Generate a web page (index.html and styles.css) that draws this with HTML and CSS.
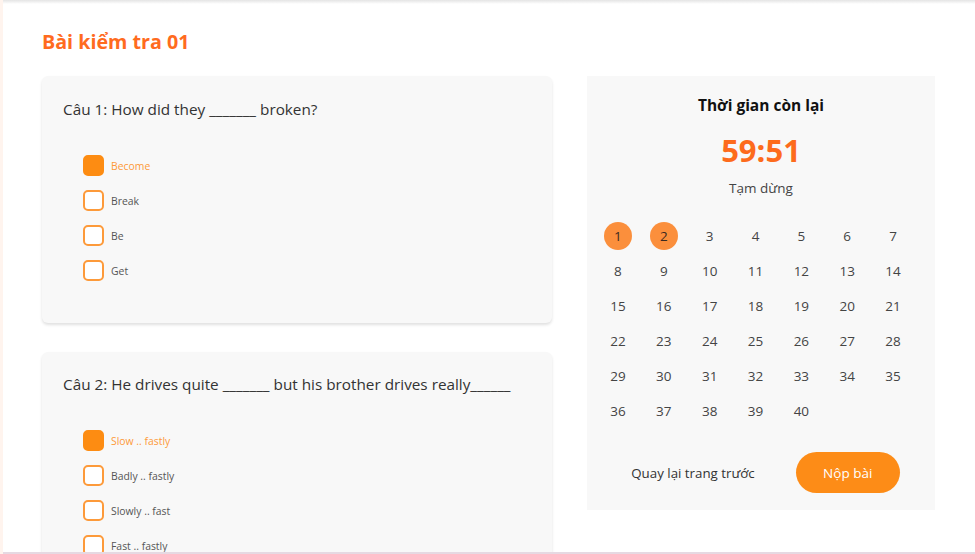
FILE: index.html
```html
<!DOCTYPE html>
<html lang="vi">
<head>
<meta charset="utf-8">
<title>Bài kiểm tra 01</title>
<link rel="stylesheet" href="styles.css">
</head>
<body>
<div class="page">
  <div class="topshade"></div>
  <div class="content">
    <h1 class="title">Bài kiểm tra 01</h1>
    <div class="layout">
      <div class="questions">
        <section class="card">
          <p class="question">Câu 1: How did they _______ broken?</p>
          <ul class="options">
            <li class="option selected"><span class="box"></span><span class="label">Become</span></li>
            <li class="option"><span class="box"></span><span class="label">Break</span></li>
            <li class="option"><span class="box"></span><span class="label">Be</span></li>
            <li class="option"><span class="box"></span><span class="label">Get</span></li>
          </ul>
        </section>
        <section class="card card2">
          <p class="question">Câu 2: He drives quite _______ but his brother drives really______</p>
          <ul class="options">
            <li class="option selected"><span class="box"></span><span class="label">Slow .. fastly</span></li>
            <li class="option"><span class="box"></span><span class="label">Badly .. fastly</span></li>
            <li class="option"><span class="box"></span><span class="label">Slowly .. fast</span></li>
            <li class="option"><span class="box"></span><span class="label">Fast .. fastly</span></li>
          </ul>
        </section>
      </div>
      <aside class="panel">
        <h2 class="panel-title">Thời gian còn lại</h2>
        <div class="timer">59:51</div>
        <div class="pause">Tạm dừng</div>
        <div class="grid">
          <span class="num done">1</span><span class="num done">2</span><span class="num">3</span><span class="num">4</span><span class="num">5</span><span class="num">6</span><span class="num">7</span>
          <span class="num">8</span><span class="num">9</span><span class="num">10</span><span class="num">11</span><span class="num">12</span><span class="num">13</span><span class="num">14</span>
          <span class="num">15</span><span class="num">16</span><span class="num">17</span><span class="num">18</span><span class="num">19</span><span class="num">20</span><span class="num">21</span>
          <span class="num">22</span><span class="num">23</span><span class="num">24</span><span class="num">25</span><span class="num">26</span><span class="num">27</span><span class="num">28</span>
          <span class="num">29</span><span class="num">30</span><span class="num">31</span><span class="num">32</span><span class="num">33</span><span class="num">34</span><span class="num">35</span>
          <span class="num">36</span><span class="num">37</span><span class="num">38</span><span class="num">39</span><span class="num">40</span>
        </div>
        <div class="actions">
          <span class="back">Quay lại trang trước</span>
          <button class="submit">Nộp bài</button>
        </div>
      </aside>
    </div>
  </div>
  <div class="bottomline"></div>
</div>
</body>
</html>
```

FILE: styles.css
```css
* { box-sizing: border-box; }
html, body { margin: 0; padding: 0; background: #fff; }
body { font-family: "Open Sans", "Noto Sans", sans-serif; color: #333; }

.page {
  position: relative;
  width: 975px;
  height: 554px;
  overflow: hidden;
  border-left: 3px solid #fff4ee;
}
.topshade {
  position: absolute;
  left: 0; right: 0; top: 0;
  height: 4px;
  background: linear-gradient(#e4e4e4, rgba(255,255,255,0));
}
.bottomline {
  position: absolute;
  left: 0; right: 0; bottom: 0;
  height: 2px;
  background: #e6d9e2;
}
.content { padding: 27px 0 0 39px; }

.title {
  margin: 0;
  font-size: 19.7px;
  line-height: 30px;
  font-weight: 700;
  color: #ff6b1e;
}

.layout {
  display: flex;
  gap: 35px;
  margin-top: 19px;
  align-items: flex-start;
}

.questions { width: 510px; display: flex; flex-direction: column; gap: 29px; }

.card {
  background: #f8f8f8;
  border-radius: 6px;
  box-shadow: 0 2px 3px rgba(0,0,0,0.12);
  padding: 22px 21px 42px;
}
.card2 { padding-top: 21px; }

.question {
  margin: 0;
  font-size: 15.3px;
  line-height: 22px;
  color: #333;
}

.options { list-style: none; margin: 35px 0 0; padding: 0 0 0 20px; display: flex; flex-direction: column; gap: 14px; }
.option { display: flex; align-items: center; height: 21px; }
.box {
  width: 21px; height: 21px;
  border: 2px solid #fd9a3a;
  border-radius: 5px;
  background: #fff;
  flex: none;
}
.label { margin-left: 7px; font-size: 10.4px; color: #555; }
.selected .box { background: #fd8c12; border-color: #fd8c12; }
.selected .label { color: #fd9a3a; }

.panel {
  width: 348px;
  height: 434px;
  background: #f8f8f8;
  padding: 18px 19px 0 8px;
  display: flex;
  flex-direction: column;
  align-items: center;
}
.panel-title {
  margin: 0 0 0 11px;
  font-size: 15.5px;
  line-height: 22px;
  font-weight: 700;
  color: #111;
}
.timer {
  margin: 16px 0 0 11px;
  font-size: 31px;
  line-height: 36px;
  font-weight: 700;
  color: #fd6b1c;
}
.pause {
  margin: 10px 0 0 11px;
  font-size: 13.5px;
  line-height: 20px;
  color: #444;
}
.grid {
  margin-top: 20px;
  width: 321px;
  display: grid;
  grid-template-columns: repeat(7, 1fr);
  grid-auto-rows: 35px;
}
.num {
  display: flex;
  align-items: center;
  justify-content: center;
  font-size: 13.5px;
  color: #444;
}
.num.done {
  width: 28px; height: 28px;
  margin: auto;
  border-radius: 50%;
  background: #fb8f3c;
  color: #3a2a20;
}

.actions {
  margin-top: 24px;
  margin-left: 20px;
  display: flex;
  align-items: center;
  gap: 41px;
}
.back { font-size: 13.3px; color: #333; }
.submit {
  width: 104px;
  height: 41px;
  border: none;
  border-radius: 21px;
  background: #fd8c17;
  color: #fff;
  font-family: "Open Sans", "Noto Sans", sans-serif;
  font-size: 13.5px;
  padding: 0;
}
```
